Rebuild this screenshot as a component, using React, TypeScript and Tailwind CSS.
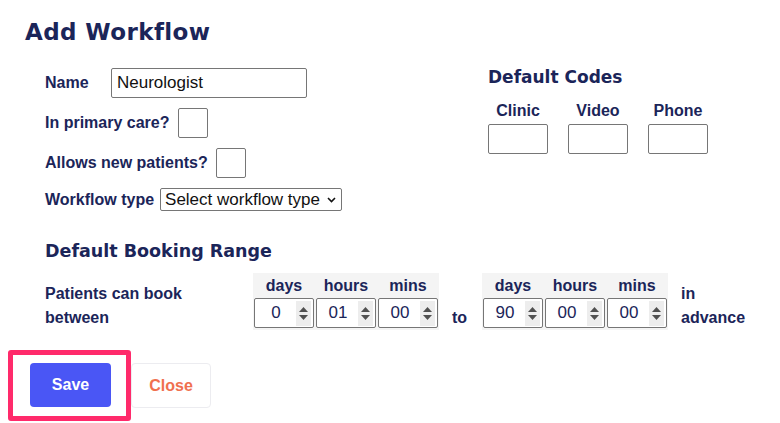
import React from "react";

const navy = "text-[#1b2559]";

function Spinner() {
  return (
    <div className="flex h-[25px] w-[15px] flex-col items-center justify-center gap-[3px] bg-[#ededed]">
      <svg width="9" height="5" viewBox="0 0 9 5"><path d="M4.5 0L9 5H0z" fill="#505050" /></svg>
      <svg width="9" height="5" viewBox="0 0 9 5"><path d="M0 0h9L4.5 5z" fill="#505050" /></svg>
    </div>
  );
}

function TimeBox({ v }: { v: string }) {
  return (
    <div className="flex h-[30px] w-[60px] items-center rounded-[2px] border border-[#767676] bg-white pl-[1px] pr-[2px]">
      <div className="flex-1 text-center text-[17px] font-normal text-[#1b2559]">{v}</div>
      <Spinner />
    </div>
  );
}

function Group({ vals }: { vals: string[] }) {
  return (
    <div className="flex flex-col bg-[#f4f4f4] pb-[2px]">
      <div className={`flex h-[25px] items-center pt-[1px] font-bold text-[16px] ${navy}`}>
        {["days", "hours", "mins"].map((l) => (
          <div key={l} className="w-[62px] text-center">{l}</div>
        ))}
      </div>
      <div className="flex gap-[2px] pl-[1px]">
        {vals.map((v, i) => (
          <TimeBox key={i} v={v} />
        ))}
      </div>
    </div>
  );
}

export default function App() {
  const head = { fontFamily: "'DejaVu Sans', 'Noto Sans', sans-serif" };
  return (
    <div
      className={`h-[423px] w-[780px] bg-white ${navy}`}
      style={{ fontFamily: "'Liberation Sans', Arial, sans-serif" }}
    >
      <div className="pl-[25px] pt-[17px]">
        <h1 className="text-[23px] font-semibold leading-[30px] tracking-[0.4px]" style={head}>
          Add Workflow
        </h1>
      </div>
      <div className="flex pl-[45px] pt-[21px]">
        <div className="flex w-[443px] flex-col text-[16px] font-bold">
          <div className="flex h-[30px] items-center">
            <span className="w-[66px]">Name</span>
            <div className="flex h-[30px] w-[196px] items-center rounded-[2px] border border-[#767676] pl-[5px] text-[17px] font-normal text-[#111]">
              Neurologist
            </div>
          </div>
          <div className="mt-[10px] flex h-[30px] items-center">
            <span>In primary care?</span>
            <div className="ml-[8px] h-[30px] w-[30px] rounded-[2px] border border-[#767676]" />
          </div>
          <div className="mt-[10px] flex h-[30px] items-center">
            <span>Allows new patients?</span>
            <div className="ml-[8px] h-[30px] w-[30px] rounded-[2px] border border-[#767676]" />
          </div>
          <div className="mt-[10px] flex h-[23px] items-center">
            <span>Workflow type</span>
            <div className="ml-[6px] flex h-[23px] w-[182px] items-center justify-between rounded-[2px] border border-[#767676] pl-[4px] pr-[5px] text-[17px] font-normal text-[#111]">
              <span>Select workflow type</span>
              <svg width="9" height="6" viewBox="0 0 9 6"><path d="M1 1l3.5 3.5L8 1" stroke="#111" strokeWidth="1.6" fill="none" /></svg>
            </div>
          </div>
        </div>
        <div className="flex flex-col">
          <div className="-mt-[1px] text-[17px] font-semibold leading-[20px]" style={head}>
            Default Codes
          </div>
          <div className="mt-[15px] flex gap-[20px] text-[16px] font-bold">
            {["Clinic", "Video", "Phone"].map((l) => (
              <div key={l} className="flex w-[60px] flex-col items-center">
                <span className="leading-[18px]">{l}</span>
                <div className="mt-[4px] h-[30px] w-[60px] rounded-[2px] border border-[#767676]" />
              </div>
            ))}
          </div>
        </div>
      </div>
      <div className="pl-[45px] pt-[29px]">
        <div className="text-[17.5px] font-semibold leading-[22px]" style={head}>
          Default Booking Range
        </div>
        <div className="mt-[11px] flex items-center text-[16px] font-bold">
          <div className="mt-[8px] w-[208px] leading-[24px]">
            Patients can book
            <br />
            between
          </div>
          <Group vals={["0", "01", "00"]} />
          <div className="mt-[32px] w-[43px] pl-[13px]">to</div>
          <Group vals={["90", "00", "00"]} />
          <div className="ml-[13px] mt-[8px] leading-[24px]">
            in
            <br />
            advance
          </div>
        </div>
      </div>
      <div className="ml-[8px] mt-[20px] flex items-start">
        <div className="rounded-[3px] border-[5px] border-[#ff2a6b] pb-[9px] pl-[17px] pr-[15px] pt-[8px]">
          <button className="h-[44px] w-[81px] rounded-[4px] bg-[#4a56f5] text-[16px] font-bold text-white">
            Save
          </button>
        </div>
        <button className="mt-[13px] h-[45px] w-[80px] rounded-[4px] border border-[#ececf0] text-[16px] font-bold text-[#f0704f]">
          Close
        </button>
      </div>
    </div>
  );
}
